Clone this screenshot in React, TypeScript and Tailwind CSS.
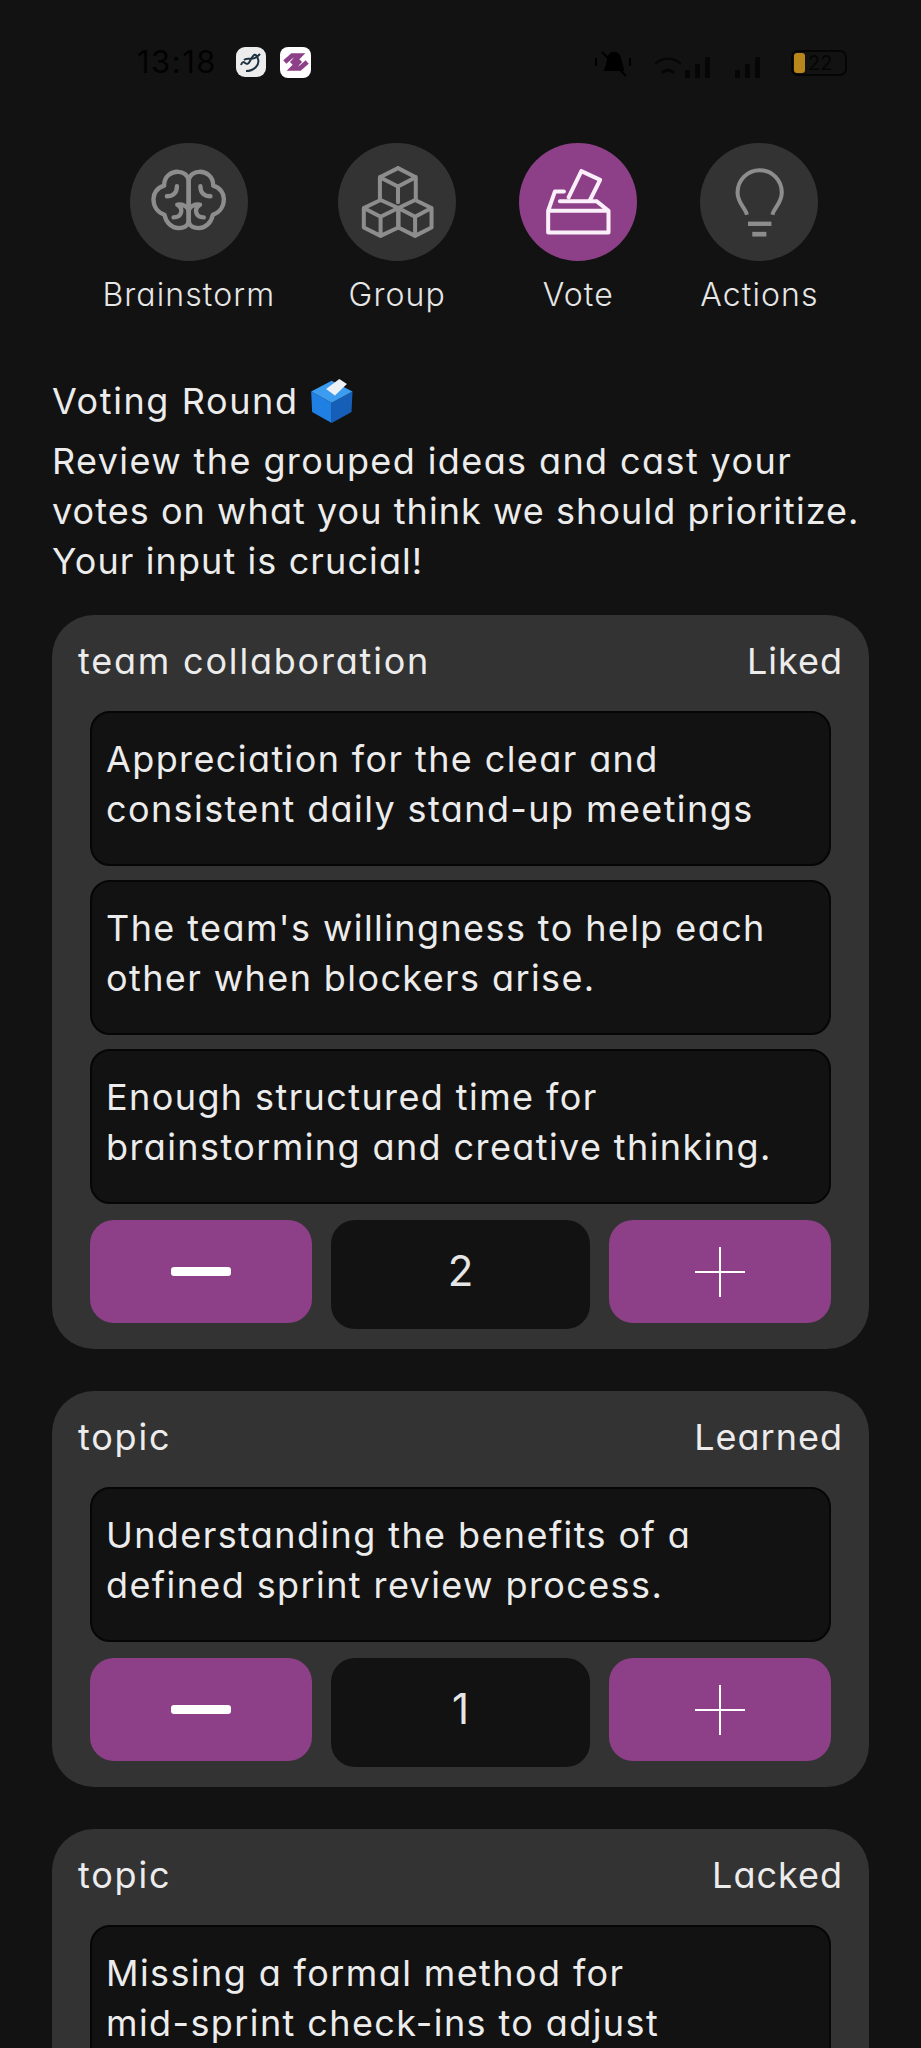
const font = "[font-family:Inter,'Liberation_Sans',sans-serif] [font-feature-settings:'cv11','ss03']";
const baseText = "text-[36px] leading-[50px] text-[#ececec]";
const bodyText = `${baseText} tracking-[1.4px]`;

function NavItem({ label, active, box, children }: { label: string; active?: boolean; box: string; children: React.ReactNode }) {
  return (
    <div className="flex flex-col items-center">
      <div className={`w-[118px] h-[118px] rounded-full ${active ? "bg-[#8d4088]" : "bg-[#333333]"}`}>
        <svg viewBox={box} className="w-full h-full" fill="none" strokeLinecap="round" strokeLinejoin="round">
          {children}
        </svg>
      </div>
      <span className="mt-[11px] text-[32px] leading-[46px] font-light tracking-[1.1px] text-[#e6e6e6] whitespace-nowrap">{label}</span>
    </div>
  );
}

function BrainHalf() {
  return (
    <>
      <path d="M300 150 C298 132 282 124 270 124 C250 122 226 137 227 165 C206 171 195 188 195 205 C195 226 206 245 228 252 C232 276 250 292 270 292 C290 292 300 282 300 268 Z" />
      <path d="M265 167 C265 188 252 197 235 197" />
      <path d="M300 240 C296 226 282 220 266 222 C286 234 280 260 255 260" />
    </>
  );
}

function Card({ title, tag, items, count }: { title: string; tag: string; items: string[]; count?: number }) {
  return (
    <div className="bg-[#333333] rounded-[42px] px-[38px] pb-[20px] pt-[21px]">
      <div className={`flex justify-between -mx-[12px] ${baseText}`}>
        <span className="tracking-[1.8px]">{title}</span>
        <span className="tracking-[1px]">{tag}</span>
      </div>
      <div className="mt-[25px] flex flex-col gap-[14px]">
        {items.map(t => (
          <div key={t} className={`bg-[#121212] border-2 border-[#060606] rounded-[20px] px-[14px] pt-[21px] pb-[30px] whitespace-pre-line ${bodyText}`}>
            {t}
          </div>
        ))}
      </div>
      {count !== undefined && (
        <div className="mt-[16px] flex items-start justify-between">
          <button className="w-[222px] h-[103px] rounded-[24px] bg-[#8d4088] flex items-center justify-center">
            <span className="w-[60px] h-[9px] rounded-[3px] bg-white" />
          </button>
          <div className="w-[259px] h-[109px] rounded-[24px] bg-[#121212] flex items-center justify-center text-[42px] text-[#e6e6e6]">
            <span className="-mt-[8px]">{count}</span>
          </div>
          <button className="w-[222px] h-[103px] rounded-[24px] bg-[#8d4088] flex items-center justify-center">
            <svg width="50" height="50" viewBox="0 0 50 50" stroke="white" strokeWidth="2">
              <path d="M25 0V50M0 25H50" />
            </svg>
          </button>
        </div>
      )}
    </div>
  );
}

export default function App() {
  return (
    <div className={`w-[921px] h-[2048px] overflow-hidden bg-[#121212] ${font}`}>
      {/* status bar, barely visible on the dark bg */}
      <div className="h-[143px] relative">
        <div className="flex items-center pl-[137px] pt-[45px] gap-[14px]">
          <span className="text-[31px] leading-[34px] tracking-[1.5px] text-[#020202] w-[85px]">13:18</span>
          <div className="w-[30px] h-[30px] rounded-[9px] bg-[#ececec] overflow-hidden">
            <svg viewBox="0 0 30 30" className="w-full h-full" fill="none" stroke="#1d3140" strokeWidth="2">
              <path d="M5 18C8 10 10 22 14 14S20 6 22 12 18 24 10 24M8 13C12 9 16 16 24 7" />
            </svg>
          </div>
          <div className="w-[31px] h-[31px] rounded-[8px] bg-white flex items-center justify-center">
            <svg viewBox="0 0 30 30" className="w-[28px] h-[28px]" fill="none" stroke="#8d4088" strokeWidth="5">
              <path d="M3 15L11 8H19L12 15L17 20M27 15L19 22H11L18 15L13 10" />
            </svg>
          </div>
        </div>
        <div className="absolute left-[593px] top-[46px] flex items-center h-[34px]">
          <svg width="40" height="34" viewBox="0 0 40 34" fill="#000" stroke="#000" strokeWidth="2">
            <path d="M12 24C16 18 13 8 20 7S27 12 30 24Z" />
            <path d="M9 6L33 30M3 12V20M37 12V20" fill="none" />
          </svg>
          <svg width="76" height="34" viewBox="0 0 76 34" className="ml-[18px]" fill="#060606">
            <path d="M4 18C12 11 22 11 30 18" fill="none" stroke="#060606" strokeWidth="2" />
            <path d="M11 27C15 23 19 23 23 27" fill="none" stroke="#060606" strokeWidth="3" />
            <rect x="34" y="24" width="5" height="8" />
            <rect x="44" y="18" width="5" height="14" />
            <rect x="54" y="11" width="5" height="21" />
          </svg>
          <svg width="40" height="34" viewBox="0 0 40 34" className="ml-[2px]" fill="#060606">
            <rect x="6" y="24" width="5" height="8" />
            <rect x="16" y="18" width="5" height="14" />
            <rect x="26" y="11" width="5" height="21" />
          </svg>
          <div className="ml-[22px] w-[56px] h-[26px] rounded-[7px] border-2 border-[#050505] relative flex items-center">
            <span className="ml-[1px] w-[11px] h-[20px] rounded-[3px] bg-[#b8861b]" />
            <span className="ml-[3px] text-[20px] leading-[20px] text-[#050505]">22</span>
          </div>
        </div>
      </div>

      <div className="flex justify-center gap-[63px]">
        <NavItem label="Brainstorm" box="125 38 352 352">
          <g stroke="#8d8d8d" strokeWidth="13">
            <BrainHalf />
            <g transform="matrix(-1 0 0 1 600 0)">
              <BrainHalf />
            </g>
          </g>
        </NavItem>
        <NavItem label="Group" box="748 38 352 352">
          <g stroke="#8d8d8d" strokeWidth="12">
            <path d="M927 113L980 140V205M927 113L873 140V205M873 140L927 168L980 140M927 168V215" />
            <path d="M875 208L825 232V290L875 315L928 290V232ZM825 232L875 258L928 232M875 258V315" />
            <path d="M978 208L928 232V290L978 315L1027 290V232ZM928 232L978 258L1027 232M978 258V315" />
          </g>
        </NavItem>
        <NavItem label="Vote" active box="90 38 352 352">
          <g stroke="#fbeffa" strokeWidth="12">
            <path d="M177 240H357V305H177ZM177 240L197 183H224M212 212H322M322 212L357 240" />
            <path d="M276 122L332 148L302 208M276 122L238 200" />
          </g>
        </NavItem>
        <NavItem label="Actions" box="632 38 352 352">
          <g stroke="#8d8d8d">
            <path d="M772 252C768 232 744 218 744 186C744 148 774 119 810 119C846 119 876 148 876 186C876 218 852 232 848 252" strokeWidth="12" strokeLinecap="butt" />
            <path d="M775 279H845" strokeWidth="13" strokeLinecap="butt" />
            <path d="M788 310H830" strokeWidth="14" strokeLinecap="butt" />
          </g>
        </NavItem>
      </div>

      <div className={`pl-[52px] mt-[58px] ${baseText}`}>
        <div className="flex items-center mb-[10px] tracking-[1.6px]">
          <span>Voting Round</span>
          <svg width="42" height="44" viewBox="0 0 126 133" className="ml-[12px]">
            <path d="M0 38L62 72V133L3 100Z" fill="#1f7fe3" />
            <path d="M125 38L62 72V133L122 100Z" fill="#165fb9" />
            <path d="M0 38L62 5L125 38L62 72Z" fill="#3b9cf0" />
            <path d="M45 30L85 0L108 15L72 50Z" fill="#eef2f6" />
          </svg>
        </div>
        <div className="tracking-[1.4px]">Review the grouped ideas and cast your</div>
        <div className="tracking-[1.05px]">votes on what you think we should prioritize.</div>
        <div className="tracking-[1.1px]">Your input is crucial!</div>
      </div>

      <div className="px-[52px] mt-[29px] flex flex-col gap-[42px]">
        <Card
          title="team collaboration"
          tag="Liked"
          count={2}
          items={[
            "Appreciation for the clear and\nconsistent daily stand-up meetings",
            "The team's willingness to help each\nother when blockers arise.",
            "Enough structured time for\nbrainstorming and creative thinking.",
          ]}
        />
        <Card title="topic" tag="Learned" count={1} items={["Understanding the benefits of a\ndefined sprint review process."]} />
        <Card title="topic" tag="Lacked" items={["Missing a formal method for\nmid-sprint check-ins to adjust"]} />
      </div>
    </div>
  );
}
